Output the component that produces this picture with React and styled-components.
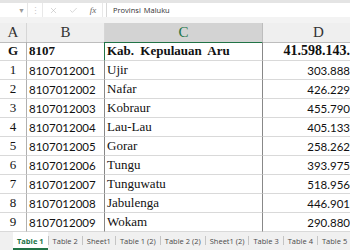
import React from "react";
import styled, { createGlobalStyle } from "styled-components";
import { X, Check } from "lucide-react";

const GlobalStyle = createGlobalStyle`
  html, body {
    margin: 0;
    padding: 0;
    width: 350px;
    height: 250px;
    overflow: hidden;
    background: #fff;
  }
`;

const GREEN = "#217346";
const SERIF = `"Liberation Serif", "DejaVu Serif", serif`;
const SANS = `Lato, "Liberation Sans", sans-serif`;
const UI = `"Open Sans", "Noto Sans", sans-serif`;

const Frame = styled.div`
  width: 350px;
  height: 250px;
  overflow: hidden;
  display: flex;
  flex-direction: column;
`;

const TopStrip = styled.div`
  height: 3px;
  background: #e4e4e4;
  flex: none;
`;

const FormulaBar = styled.div`
  height: 14px;
  flex: none;
  display: flex;
  align-items: stretch;
  background: #fff;
  font-family: ${UI};
`;

const NameBox = styled.div`
  width: 28px;
  display: flex;
  align-items: center;
  justify-content: flex-end;
  padding-right: 2px;
  box-sizing: border-box;
  border-right: 1px solid #e6e6e6;
  color: #9a9a9a;
  font-size: 7px;
`;

const Dots = styled.div`
  width: 14px;
  display: flex;
  align-items: center;
  justify-content: center;
  color: #c8c8c8;
  font-size: 9px;
`;

const FuncBox = styled.div`
  width: 59px;
  display: flex;
  align-items: center;
  justify-content: space-around;
  border: 1px solid #e8e8e8;
  border-top: none;
  border-bottom: none;
  color: #b8b8b8;
`;

const Fx = styled.span`
  font-family: ${SERIF};
  font-style: italic;
  font-size: 9px;
  color: #666;
`;

const FormulaInput = styled.div`
  flex: 1;
  margin-left: 3px;
  border-left: 1px solid #d8d8d8;
  display: flex;
  align-items: center;
  padding-left: 6px;
  font-size: 7.5px;
  color: #333;
  word-spacing: 1px;
`;

const Gap = styled.div`
  height: 6px;
  flex: none;
  background: #f3f3f3;
`;

const Sheet = styled.div`
  display: grid;
  grid-template-columns: 27px 78px 158px 112px;
  grid-auto-rows: 19px;
  width: 375px;
  flex: none;
`;

const HeaderCell = styled.div`
  height: 20px;
  box-sizing: border-box;
  display: flex;
  align-items: center;
  justify-content: center;
  font-family: ${SERIF};
  font-size: 15px;
  color: ${(p) => (p.$selected ? GREEN : "#333")};
  background: ${(p) => (p.$selected ? "#d3d3d3" : "#efefef")};
  border-right: 1px solid ${(p) => (p.$selected ? "#bdbdbd" : "#d6d6d6")};
  border-bottom: 1px solid ${(p) => (p.$selected ? GREEN : "#bdbdbd")};
`;

const Cell = styled.div`
  box-sizing: border-box;
  display: flex;
  align-items: center;
  justify-content: ${(p) =>
    p.$align === "right" ? "flex-end" : p.$align === "center" ? "center" : "flex-start"};
  padding: ${(p) => (p.$align === "right" ? "0 24px 0 0" : p.$align === "center" ? "0" : "0 0 0 2px")};
  font-family: ${(p) => (p.$sans ? SANS : SERIF)};
  font-size: ${(p) => (p.$sans ? "11.5px" : "13px")};
  font-weight: ${(p) => (p.$bold ? 700 : 400)};
  color: #111;
  white-space: nowrap;
  overflow: hidden;
  border-bottom: 1px solid #d9d9d9;
  border-right: 1px solid ${(p) => p.$edge || "#888"};
  border-left: ${(p) => (p.$active ? `1px solid ${GREEN}` : "none")};
  margin-left: ${(p) => (p.$active ? "-1px" : "0")};
`;

const TabBar = styled.div`
  flex: 1;
  display: flex;
  align-items: stretch;
  background: #f0f0f0;
  padding-left: 13px;
  font-family: ${UI};
  font-size: 7.5px;
`;

const Tab = styled.div`
  position: relative;
  display: flex;
  align-items: center;
  padding: 0 4px 1px;
  margin-right: 1px;
  white-space: nowrap;
  color: ${(p) => (p.$active ? GREEN : "#4a4a4a")};
  font-weight: ${(p) => (p.$active ? 700 : 400)};
  background: ${(p) => (p.$active ? "#fff" : "transparent")};
  box-shadow: ${(p) => (p.$active ? `inset 0 -2px 0 ${GREEN}` : "none")};
  &::after {
    content: "";
    position: absolute;
    right: -1px;
    top: 4px;
    height: 9px;
    width: 1px;
    background: #c4c4c4;
  }
`;

const rows = [
  ["1", "8107012001", "Ujir", "303.888"],
  ["2", "8107012002", "Nafar", "426.229"],
  ["3", "8107012003", "Kobraur", "455.790"],
  ["4", "8107012004", "Lau-Lau", "405.133"],
  ["5", "8107012005", "Gorar", "258.262"],
  ["6", "8107012006", "Tungu", "393.975"],
  ["7", "8107012007", "Tunguwatu", "518.956"],
  ["8", "8107012008", "Jabulenga", "446.901"],
  ["9", "8107012009", "Wokam", "290.880"],
];

const tabs = [
  "Table 1",
  "Table 2",
  "Sheet1",
  "Table 1 (2)",
  "Table 2 (2)",
  "Sheet1 (2)",
  "Table 3",
  "Table 4",
  "Table 5",
];

export default function App() {
  return (
    <Frame>
      <GlobalStyle />
      <TopStrip />
      <FormulaBar>
        <NameBox>▼</NameBox>
        <Dots>⋮</Dots>
        <FuncBox>
          <X size={9} strokeWidth={1.5} />
          <Check size={9} strokeWidth={1.5} />
          <Fx>fx</Fx>
        </FuncBox>
        <FormulaInput>Provinsi Maluku</FormulaInput>
      </FormulaBar>
      <Gap />
      <Sheet>
        <HeaderCell>A</HeaderCell>
        <HeaderCell>B</HeaderCell>
        <HeaderCell $selected>C</HeaderCell>
        <HeaderCell>D</HeaderCell>

        <Cell $align="center" $bold $edge="#b0b0b0">G</Cell>
        <Cell $bold>8107</Cell>
        <Cell $bold $active style={{ wordSpacing: "3px" }}>Kab. Kepulauan Aru</Cell>
        <Cell $align="right" $bold style={{ fontSize: "14px" }}>41.598.143.</Cell>

        {rows.map(([no, code, name, value]) => (
          <React.Fragment key={code}>
            <Cell $align="center" $edge="#b0b0b0">{no}</Cell>
            <Cell $sans>{code}</Cell>
            <Cell>{name}</Cell>
            <Cell $align="right" $sans>{value}</Cell>
          </React.Fragment>
        ))}
      </Sheet>
      <TabBar>
        {tabs.map((t, i) => (
          <Tab key={t} $active={i === 0}>{t}</Tab>
        ))}
      </TabBar>
    </Frame>
  );
}
